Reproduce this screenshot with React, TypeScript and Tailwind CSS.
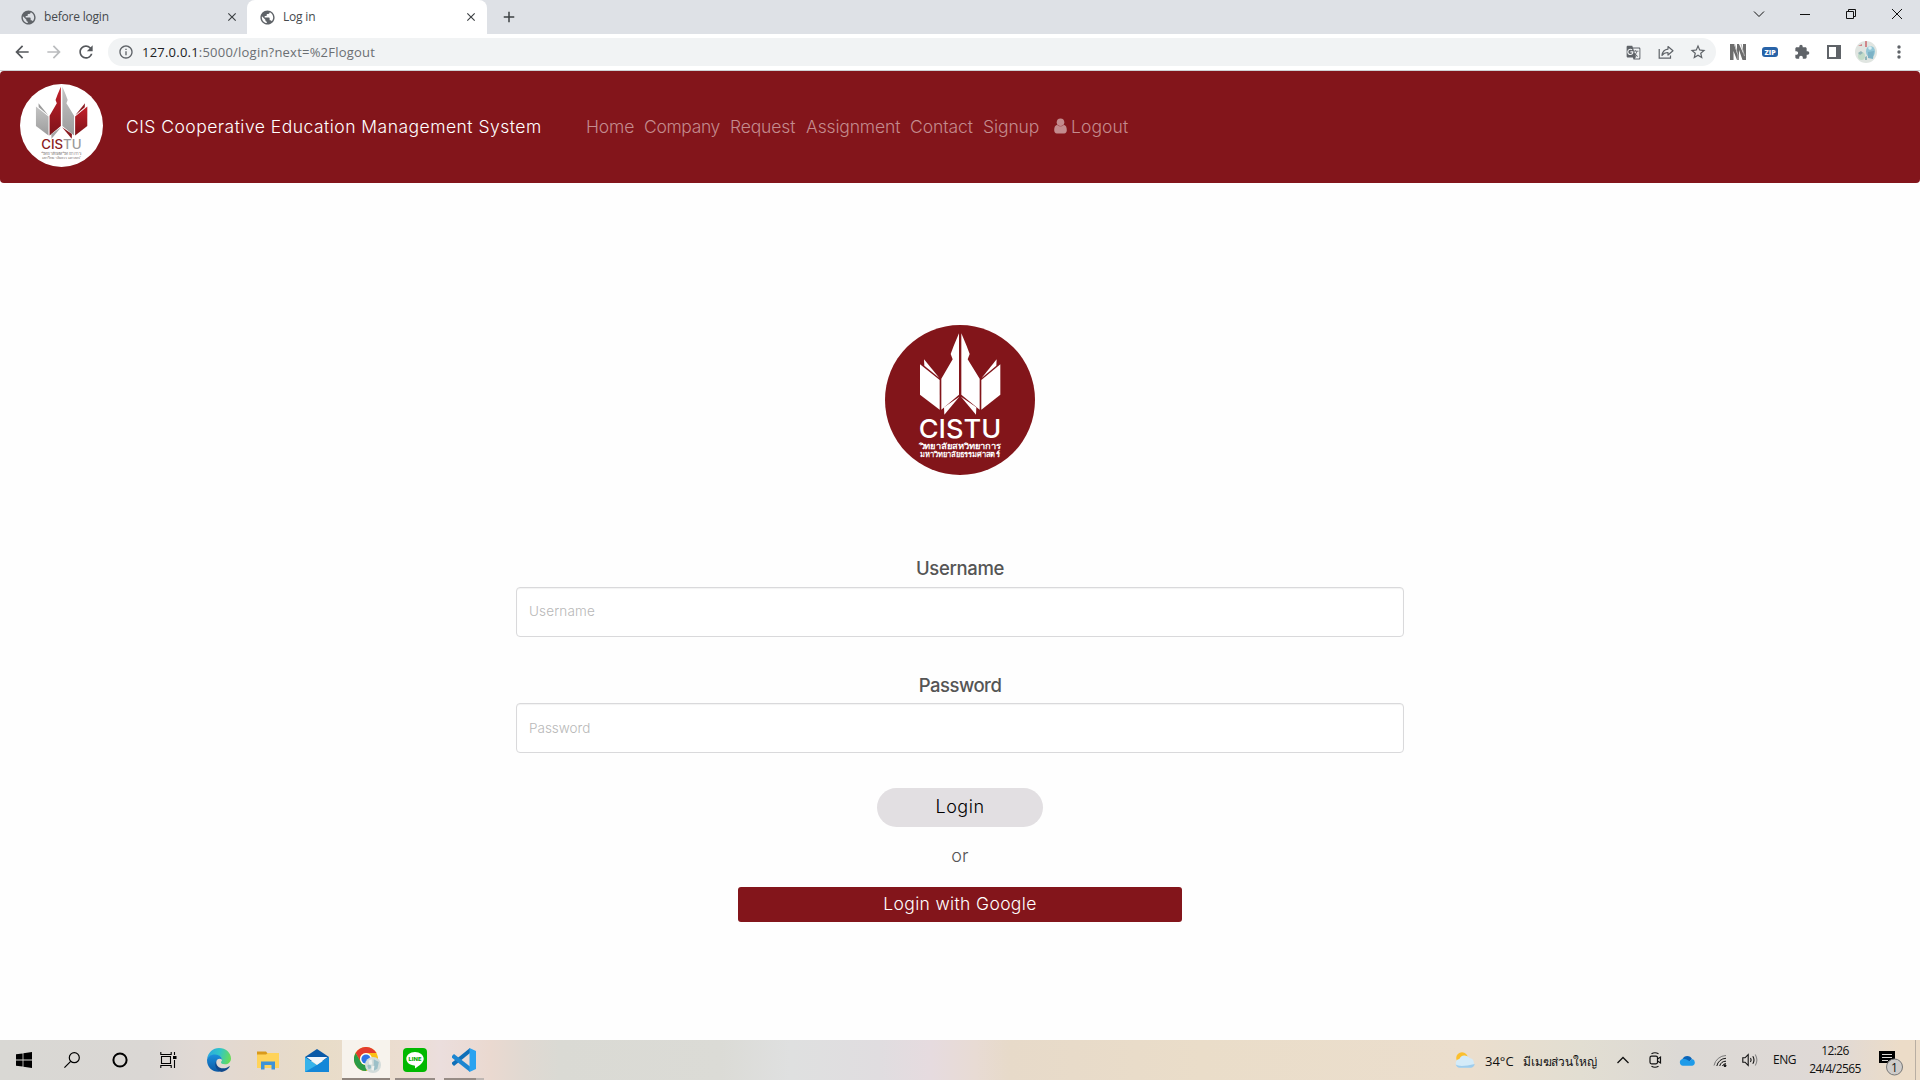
import React from "react";
import {
  MdPublic,
  MdGTranslate,
  MdStarBorder,
  MdExtension,
  MdArrowBack,
  MdArrowForward,
  MdRefresh,
  MdInfoOutline,
  MdClose,
  MdAdd,
} from "react-icons/md";

type EmblemColors = {
  outerLeft: string;
  innerLeft: string;
  innerRight: string;
  outerRight: string;
  topLeft: string;
  topRight: string;
  bottomLeft: string;
  bottomRight: string;
};

function Emblem({ c }: { c: EmblemColors }) {
  return (
    <>
      <path fill={c.innerLeft} d="M267 70 251 108 242 132 248 148 214 206V299L267 254Z" />
      <path fill={c.innerRight} d="M274 70 290 108 299 132 293 148 329 206V299L274 254Z" />
      <path fill={c.outerLeft} d="M150 163 209 210V299L150 254Z" />
      <path fill={c.outerRight} d="M391 163 334 210V299L391 254Z" />
      <path fill={c.topLeft} d="M162 148 208 204 163 167Z" />
      <path fill={c.topRight} d="M380 148 335 204 379 167Z" />
      <path fill={c.bottomLeft} d="M222 292 268 260 223 314Z" />
      <path fill={c.bottomRight} d="M319 292 273 260 318 314Z" />
    </>
  );
}

const white: EmblemColors = {
  outerLeft: "#fff",
  innerLeft: "#fff",
  innerRight: "#fff",
  outerRight: "#fff",
  topLeft: "#fff",
  topRight: "#fff",
  bottomLeft: "#fff",
  bottomRight: "#fff",
};

const tinted: EmblemColors = {
  outerLeft: "url(#silver)",
  innerLeft: "url(#crimson)",
  innerRight: "url(#silver)",
  outerRight: "url(#crimson)",
  topLeft: "#9b9b9b",
  topRight: "#8a1a20",
  bottomLeft: "#a5a5a5",
  bottomRight: "#8a1a20",
};

function LoginLogo() {
  return (
    <svg className="size-[150px]" viewBox="45 45 450 450">
      <circle cx="270" cy="270" r="225" fill="#82151a" />
      <Emblem c={white} />
      <text x="146" y="385" fontFamily="Inter" fontWeight="500" fontSize="78" fill="#fff" textLength="248" lengthAdjust="spacingAndGlyphs">
        CISTU
      </text>
      <g fontFamily="'Noto Sans', sans-serif" fontWeight="600" fill="#fff">
        <text x="149" y="416" fontSize="24" textLength="242" lengthAdjust="spacingAndGlyphs">วิทยาลัยสหวิทยาการ</text>
        <text x="149" y="441" fontSize="22" textLength="240" lengthAdjust="spacingAndGlyphs">มหาวิทยาลัยธรรมศาสตร์</text>
      </g>
    </svg>
  );
}

function NavLogo() {
  return (
    <svg className="size-[83px]" viewBox="0 0 83 83">
      <defs>
        <linearGradient id="crimson" x1="0" y1="0" x2="0" y2="1">
          <stop offset="0" stopColor="#c4202a" />
          <stop offset="1" stopColor="#7d1319" />
        </linearGradient>
        <linearGradient id="silver" x1="0" y1="0" x2="0" y2="1">
          <stop offset="0" stopColor="#c4c4c4" />
          <stop offset="1" stopColor="#9c9c9c" />
        </linearGradient>
      </defs>
      <circle cx="41.5" cy="41.5" r="41.5" fill="#fff" />
      <g transform="translate(-16 -12.2) scale(.213)">
        <Emblem c={tinted} />
      </g>
      <text x="21.2" y="65.3" fontFamily="Inter" fontWeight="500" fontSize="12.4" textLength="40.3" lengthAdjust="spacingAndGlyphs">
        <tspan fill="#8a1a20">CIS</tspan>
        <tspan fill="#9b9b9b">TU</tspan>
      </text>
      <g fontFamily="'Noto Sans', sans-serif" fill="#8d8585">
        <text x="21.5" y="70.5" fontSize="4" textLength="39.5" lengthAdjust="spacingAndGlyphs">วิทยาลัยสหวิทยาการ</text>
        <text x="21.5" y="75" fontSize="3.6" textLength="39" lengthAdjust="spacingAndGlyphs">มหาวิทยาลัยธรรมศาสตร์</text>
      </g>
    </svg>
  );
}

function Tab({ title, active }: { title: string; active?: boolean }) {
  return (
    <div
      className={
        active
          ? "flex h-[34px] w-[240px] items-center rounded-t-[8px] bg-white pl-[12px] pr-[9px]"
          : "flex h-[34px] w-[239px] items-center pl-[12px] pr-[8px]"
      }
    >
      <MdPublic className="size-[17px] text-[#5f6368]" />
      <span className="ml-[7px] flex-1 text-[12px] tracking-[-0.2px] text-[#45494d]">{title}</span>
      <MdClose className="size-[14px] text-[#3c4043]" />
    </div>
  );
}

function TabStrip() {
  return (
    <header className="flex h-[34px] bg-[#dee1e6]">
      <div className="w-2" />
      <Tab title="before login" />
      <Tab title="Log in" active />
      <div className="flex flex-1 items-center pl-[13px]">
        <MdAdd className="size-[18px] text-[#3c4043]" />
      </div>
      <svg className="h-[28px] w-[184px]" viewBox="1736 0 184 28" fill="none" stroke="#111" strokeWidth="1">
        <path d="M1754 11.5 1759 16.5 1764 11.5" />
        <path d="M1800 14.5H1810" />
        <path d="M1846.5 11.5H1853.5V18.5H1846.5ZM1848.5 11V9.5H1855.5V16.5H1854" />
        <path d="M1892 9 1902 19M1902 9 1892 19" />
      </svg>
    </header>
  );
}

function Toolbar() {
  return (
    <div className="flex h-[37px] items-center border-b border-[#cfd1d4] bg-white pl-[12px]">
      <MdArrowBack className="size-[20px] text-[#55585c]" />
      <MdArrowForward className="ml-[12px] size-[20px] text-[#babcbe]" />
      <MdRefresh className="ml-[12px] size-[20px] text-[#55585c]" />
      <div className="ml-[12px] flex h-[28px] w-[1608px] items-center rounded-full bg-[#f1f3f4] pl-[10px] pr-[9px]">
        <MdInfoOutline className="size-[16px] text-[#5f6368]" />
        <p className="ml-[8px] flex-1 pt-px text-[13px] tracking-[0.22px] text-[#6b6f73]">
          <span className="text-[#202124]">127.0.0.1</span>:5000/login?next=%2Flogout
        </p>
        <MdGTranslate className="size-[15px] text-[#5f6368]" />
        <svg className="ml-[17px] size-[16px]" viewBox="0 0 16 16" fill="none" stroke="#5f6368" strokeWidth="1.2">
          <path d="M1.2 5V14.2H12.5V11.5" />
          <path d="M10 2.5 15 6.7 10 11V8.5C7.2 8.5 5.4 9.4 4 11.4 4.4 7.8 6.6 5.5 10 5.1Z" strokeLinejoin="round" />
        </svg>
        <MdStarBorder className="ml-[15px] size-[18px] text-[#5f6368]" />
      </div>
      <svg className="ml-[14px] size-[16px]" viewBox="0 0 16 16">
        <path d="M0 0H4L7 9V0H9L13 9V0H16V16H12.5L9 6V16H7L3.5 7V16H0Z" fill="#6d6d6d" />
        <path d="M4.5 0 8 11V16M11 0 14.5 12" stroke="#b5b5b5" fill="none" />
      </svg>
      <div className="ml-[16px] flex h-[10px] w-[16px] items-center justify-center rounded-[3px] bg-[#2863a8] text-[7px] leading-none font-black text-white">
        ZIP
      </div>
      <MdExtension className="ml-[16px] size-[16px] text-[#5f6368]" />
      <svg className="ml-[17px] h-[14px] w-[14px]" viewBox="0 0 14 14">
        <path d="M0 0H14V14H0ZM2 2V12H9V2Z" fill="#5f6368" fillRule="evenodd" />
      </svg>
      <Avatar className="ml-[14px] size-[22px]" />
      <svg className="ml-[19.5px] h-[14px] w-[4px]" viewBox="0 0 4 14" fill="#5f6368">
        <circle cx="2" cy="2" r="1.7" />
        <circle cx="2" cy="7" r="1.7" />
        <circle cx="2" cy="12" r="1.7" />
      </svg>
    </div>
  );
}

function Avatar({ className }: { className: string }) {
  return (
    <svg className={className} viewBox="0 0 22 22">
      <clipPath id="round">
        <circle cx="11" cy="11" r="11" />
      </clipPath>
      <g clipPath="url(#round)">
        <path fill="#e0e5e1" d="M0 0H22V22H0Z" />
        <path fill="#d0868a" d="M10 0H12V6H10ZM3 5 7 3V5Z" />
        <ellipse cx="15.5" cy="10.5" rx="4.5" ry="5.5" fill="#92c6d6" />
        <path fill="#7cb2c6" d="M13 11 19 10 18 18 13 17Z" />
        <circle cx="15" cy="7" r="1.8" fill="#d7eef2" />
        <ellipse cx="6.5" cy="15" rx="3.5" ry="4" fill="#c2dbc8" />
        <path fill="#93b5b8" d="M3 12 6 10 8 12 5 14ZM10 16 12 15 12 19 10 19Z" />
      </g>
    </svg>
  );
}

function Navbar() {
  return (
    <nav className="flex h-[112px] rounded-[4px] bg-[#83151b] pl-[20px] pt-[13px] font-['Inter'] text-[17.5px] font-light">
      <NavLogo />
      <div className="flex h-[84px] items-center leading-[27px]">
        <a className="ml-[23px] w-[460px] tracking-[0.48px] whitespace-nowrap text-white">CIS Cooperative Education Management System</a>
        <div className="flex text-[#c38b8e]">
          <a className="w-[58px] tracking-[-0.15px]">Home</a>
          <a className="w-[86px] tracking-[-0.36px]">Company</a>
          <a className="w-[76px] tracking-[-0.15px]">Request</a>
          <a className="w-[104px] tracking-[-0.15px]">Assignment</a>
          <a className="w-[73px] tracking-[-0.05px]">Contact</a>
          <a className="w-[71px] tracking-[-0.1px]">Signup</a>
          <a className="flex items-center tracking-[0.1px]">
            <svg className="mr-[4px] h-[16px] w-[13px]" viewBox="0 0 13 16" fill="#c38b8e">
              <circle cx="6.5" cy="4.2" r="3.8" />
              <path d="M3.2 6.8C5 8.8 8 8.8 9.8 6.8 12 7.2 12.8 9.5 12.8 12.3 12.8 14.2 11.8 15.5 10.2 15.5H2.8C1.2 15.5.2 14.2.2 12.3.2 9.5 1 7.2 3.2 6.8Z" />
            </svg>
            Logout
          </a>
        </div>
      </div>
    </nav>
  );
}

function LoginForm() {
  return (
    <main className="flex flex-1 flex-col items-center bg-[#fefefe] pt-[142px] font-['Inter'] font-light text-[#555]">
      <LoginLogo />
      <div className="mt-[78px] flex w-[888px] flex-col items-center">
        <label className="h-[34px] text-[18.5px] leading-[31px] font-medium tracking-[-0.35px]">Username</label>
        <input
          placeholder="Username"
          className="h-[50px] w-full rounded-[4px] border border-[#d9d9db] bg-white px-[12px] pb-[2px] text-[13.5px] tracking-[0.15px] shadow-[inset_0_1px_1px_rgba(0,0,0,0.05)] placeholder:text-[#b8b8b8]"
        />
        <label className="mt-[33px] h-[33px] text-[18.5px] leading-[31px] font-medium tracking-[-0.5px]">Password</label>
        <input
          placeholder="Password"
          className="h-[50px] w-full rounded-[4px] border border-[#d9d9db] bg-white px-[12px] pb-[1px] text-[13.5px] shadow-[inset_0_1px_1px_rgba(0,0,0,0.05)] placeholder:text-[#b8b8b8]"
        />
        <button className="mt-[35px] h-[39px] w-[166px] rounded-full bg-[#e2dfe2] pb-[2px] text-[18px] tracking-[0.5px] text-black">Login</button>
        <p className="mt-[15px] text-[18px] leading-[27px] tracking-[0.3px] text-[#555]">or</p>
        <button className="mt-[18px] h-[35px] w-[444px] rounded-[3px] bg-[#83151b] pb-[1px] text-[17.5px] tracking-[0.35px] text-white">
          Login with Google
        </button>
      </div>
    </main>
  );
}

function Slot({ children, className = "w-[48px]" }: { children: React.ReactNode; className?: string }) {
  return <div className={"flex h-full items-center justify-center " + className}>{children}</div>;
}

function Apps() {
  return (
    <div className="flex h-full">
      <Slot>
        <svg className="size-[16px]" viewBox="0 0 16 16">
          <path d="M0 2.3 6.6 1.4V7.6H0ZM7.4 1.2 16 0V7.6H7.4ZM0 8.4H6.6V14.6L0 13.7ZM7.4 8.4H16V16L7.4 14.8Z" />
        </svg>
      </Slot>
      <Slot>
        <svg className="size-[16px]" viewBox="0 0 16 16" fill="none" stroke="#000" strokeWidth="1.2">
          <circle cx="10.3" cy="5.7" r="5" />
          <path d="M6.7 9.3.4 15.6" />
        </svg>
      </Slot>
      <Slot>
        <svg className="size-[16px]" viewBox="0 0 16 16" fill="none" stroke="#000" strokeWidth="2">
          <circle cx="8" cy="8" r="6.6" />
        </svg>
      </Slot>
      <Slot>
        <svg className="h-[16px] w-[17px]" viewBox="0 0 17 16" fill="none" stroke="#000" strokeWidth="1.1">
          <path d="M1.5 4.5H10.5V11.5H1.5ZM.8 0V2.5H11.2V0M.8 16V13.5H11.2V16M14.5 0V3M14.5 8V16" />
          <path d="M13 4H16.5V7H13Z" fill="#000" stroke="none" />
        </svg>
      </Slot>
      <Slot className="w-[54px]">
        <svg className="size-[24px]" viewBox="0 0 24 24">
          <defs>
            <linearGradient id="edgeTop" x1="0" y1=".3" x2="1" y2=".5">
              <stop offset="0" stopColor="#2aa7e0" />
              <stop offset=".5" stopColor="#31c5c8" />
              <stop offset="1" stopColor="#68dc58" />
            </linearGradient>
            <linearGradient id="edgeLow" x1="0" y1="0" x2="0" y2="1">
              <stop offset="0" stopColor="#1b8fdc" />
              <stop offset="1" stopColor="#0c59a4" />
            </linearGradient>
          </defs>
          <path fill="url(#edgeTop)" d="M0 11C1 4.5 6 0 12 0 18.7 0 24 4.7 24 10.5 24 14 21.3 16.3 18 16.3 15 16.3 14 15.3 14 14.3 14 13.6 15 13.2 15 11.7 15 9.4 12 7 8.3 7 4.2 7 1 9 0 11Z" />
          <path fill="url(#edgeLow)" d="M0 12C.4 8.5 4.2 6.4 8.2 6.6 12.2 6.8 15 9.3 15 11.8 13 9.5 9 11 9 15 9 19 12.4 22.5 16 22.7 9 26 0 21.5 0 12Z" />
          <path fill="#11498c" d="M9.3 13C8.5 17.5 12 20.3 16 20.3 19 20.3 20.8 19.2 22.3 18.2 22.8 18 23 18.4 22.7 18.8 20.8 21.8 18 23.4 14.8 23.9 9.6 23 6.5 17.3 9.3 13Z" />
        </svg>
      </Slot>
      <Slot className="w-[44px]">
        <svg className="h-[19px] w-[22px]" viewBox="0 0 22 19">
          <path fill="#d99a1c" d="M0 .5H9L11 3H22V5H0Z" />
          <path fill="#ffd35a" d="M0 3.5H9L11 2H22V17H0Z" />
          <path fill="#3d93d8" d="M4 18.5V10.5H18V18.5H14.5V14H7.5V18.5Z" />
        </svg>
      </Slot>
      <Slot className="w-[52px] pl-px">
        <svg className="h-[23px] w-[24px]" viewBox="0 0 24 23">
          <path fill="#0b5aa8" d="M0 8 12 0 24 8V12H0Z" />
          <path fill="#37b3ea" d="M0 8 12 16 24 8V23H0Z" />
          <path fill="#1487d8" d="M24 8V23H0L14 14.8Z" />
          <path fill="#f4f6fa" d="M1.5 8H22.5L13.5 14.8 12 15.7Z" />
        </svg>
      </Slot>
      <div className="flex h-full w-[48px] items-center justify-center border-b-2 border-[#8f857e] bg-[#f7f3ed]">
        <svg className="mt-[2px] ml-[3px] h-[26px] w-[27px]" viewBox="0 0 27 26">
          <circle cx="12" cy="12" r="12" fill="#fbc116" />
          <path fill="#e33b2e" d="M1.6 6A12 12 0 0 1 22.4 6H12A6 6 0 0 0 6.5 14.5Z" />
          <path fill="#2a9b48" d="M1.6 6 6.8 15A6 6 0 0 0 17 15.2L12 24A12 12 0 0 1 1.6 6Z" />
          <circle cx="12" cy="12" r="6" fill="#fff" />
          <circle cx="12" cy="12" r="4.6" fill="#2e74e5" />
          <svg x="11" y="10" width="16" height="16" viewBox="0 0 22 22">
            <circle cx="11" cy="11" r="11" fill="#d3dcda" />
            <path fill="#9cc0c8" d="M12 3 19 7 17 16 12 19ZM3 12 7 9 9 15 5 17Z" />
            <path fill="#eef1ee" d="M5 5 9 3 10 10 6 11ZM9 13 13 12 12 19 9 18Z" />
          </svg>
        </svg>
      </div>
      <div className="ml-[5px] flex h-full w-[40px] items-center justify-center border-b-2 border-[#978c86]">
        <svg className="mt-[2px] size-[24px]" viewBox="0 0 24 24">
          <rect width="24" height="24" rx="4" fill="#00b900" />
          <path fill="#fff" d="M12 4C16.9 4 20.7 7 20.7 10.8 20.7 14 17 17.5 12 20.5 12 19.5 12.3 18 11.5 17.6 6.8 17.3 3.3 14.4 3.3 10.8 3.3 7 7.1 4 12 4Z" />
          <text x="5.6" y="13" fontFamily="Inter" fontWeight="800" fontSize="5.4" fill="#00a900" textLength="12.8" lengthAdjust="spacingAndGlyphs">LINE</text>
        </svg>
      </div>
      <div className="ml-[9px] flex h-full w-[40px] flex-col">
        <div className="flex flex-1 items-center justify-center">
          <svg className="mt-[2px] size-[24px]" viewBox="0 0 24 24">
            <path fill="#0f6fb8" d="M0 16 2 18 18 5V0L0 14.5Z" />
            <path fill="#1c86d1" d="M0 8 2 6 18 18.5V24L0 9.8Z" />
            <path fill="#2ba3f0" d="M17.5 0 24 3V21L17.5 24Z" />
          </svg>
        </div>
        <div className="flex h-[2px]">
          <div className="w-[32px] bg-[#978c86]" />
          <div className="w-[8px] bg-[#beb6b2]" />
        </div>
      </div>
    </div>
  );
}

function Tray() {
  return (
    <div className="flex h-full items-center text-[12px] text-[#111]">
      <svg className="h-[17px] w-[21px]" viewBox="0 0 21 17">
        <circle cx="7" cy="6" r="5.8" fill="#fbbf2d" />
        <path fill="#d4ebf8" d="M4.5 15.5A4.3 4.3 0 0 1 4.3 7 5.8 5.8 0 0 1 14.5 6 5 5 0 0 1 16 15.5Z" />
        <path fill="#9fcdec" d="M.8 12.5C3 14.5 10 14.5 19.8 12 19 14.5 17.5 15.7 16 15.7H4.5C2.7 15.6 1.3 14.3.8 12.5Z" />
      </svg>
      <span className="ml-[9px] w-[38px] pt-[3px] text-[13px]">34°C</span>
      <span className="w-[82px] pt-[3px] text-[12px] tracking-[-0.15px] whitespace-nowrap">มีเมฆส่วนใหญ่</span>
      <svg className="ml-[12px] h-[8px] w-[12px]" viewBox="0 0 12 8" fill="none" stroke="#111" strokeWidth="1.3">
        <path d="M.5 7 6 1.5 11.5 7" />
      </svg>
      <svg className="ml-[20px] h-[16px] w-[13px]" viewBox="0 0 13 16" fill="none" stroke="#111" strokeWidth="1.2">
        <rect x="1" y="4.2" width="7.5" height="7.6" rx="1.5" />
        <path d="M8.5 7 11.5 5V11L8.5 9M2.5 1.8Q6 -.3 9.5 1.8M2.5 14.2Q6 16.3 9.5 14.2" />
      </svg>
      <svg className="ml-[17px] h-[11px] w-[17px]" viewBox="0 0 17 11">
        <path fill="#0a64b8" d="M3.5 4A5.3 5.3 0 0 1 13 4L9 8 2 9Z" />
        <path fill="#1e9be9" d="M4 10.8A3.5 3.5 0 0 1 3.6 3.9C6.5 3.5 8 5 10.5 6.2L13 4A3.5 3.5 0 0 1 13.3 10.8Z" />
      </svg>
      <svg className="ml-[17px] h-[14px] w-[14px]" viewBox="0 0 14 14" fill="none" stroke="#111" strokeWidth="1">
        <path d="M1 12.5A12.5 12.5 0 0 1 13 2.5" stroke="#777" />
        <path d="M3.8 13A9.5 9.5 0 0 1 13 5.3M6.7 13A6.6 6.6 0 0 1 13 8.2M9.4 13A4 4 0 0 1 13 10.6" />
        <circle cx="12" cy="12.7" r="1" fill="#111" />
      </svg>
      <svg className="ml-[15px] h-[14px] w-[17px]" viewBox="0 0 17 14" fill="none" stroke="#111" strokeWidth="1.1">
        <path d="M.8 4.8H3L6.2 1.5V12.5L3 9.2H.8Z" />
        <path d="M8.5 5Q9.8 7 8.5 9M10.8 3.2Q13.2 7 10.8 10.8" />
        <path d="M13.2 1.5Q16.6 7 13.2 12.5" stroke="#888" />
      </svg>
      <span className="ml-[14px] w-[24px] tracking-[-0.5px]">ENG</span>
      <div className="ml-[10px] w-[56px] text-center leading-[18px] tracking-[-0.6px]">
        <p>12:26</p>
        <p>24/4/2565</p>
      </div>
      <svg className="mt-[8px] ml-[16px] h-[26px] w-[25px]" viewBox="0 0 25 26">
        <path fill="#000" d="M0 0H16V12H12L8 16V12H0Z" />
        <path stroke="#dcd9d5" strokeWidth="1.2" d="M3 3.5H13M3 6.5H13M3 9.5H9" />
        <circle cx="15.5" cy="16" r="8" fill="#cfccca" stroke="#777" />
        <text x="15.5" y="20.5" fontFamily="Open Sans" fontSize="12" textAnchor="middle" fill="#111">1</text>
      </svg>
      <div className="mr-[4px] ml-[11px] h-full w-px bg-[#b8aea3]" />
    </div>
  );
}

function Taskbar() {
  return (
    <footer className="flex h-[40px] justify-between bg-[linear-gradient(90deg,#d9d8d4_0,#dad7d4_150px,#e1d9d4_200px,#e4d9ce_250px,#e8dcc8_320px,#ebddd0_400px,#ebdedd_440px,#ead9d0_490px,#e0d9d2_525px,#dadad4_560px,#dbdbd6_720px,#dfe0e0_790px,#e0dde0_880px,#e6dbdf_930px,#e8dbd4_975px,#e7dac9_1010px,#eaddc9_1200px,#ebdecd_1470px,#e2ded2_1580px,#dcd9d5_1680px,#dfd9d6_1830px,#ecdcc8_1900px)]">
      <Apps />
      <Tray />
    </footer>
  );
}

export default function App() {
  return (
    <div className="flex h-[1080px] w-[1920px] flex-col overflow-hidden bg-white font-['Open_Sans',sans-serif]">
      <TabStrip />
      <Toolbar />
      <Navbar />
      <LoginForm />
      <Taskbar />
    </div>
  );
}
